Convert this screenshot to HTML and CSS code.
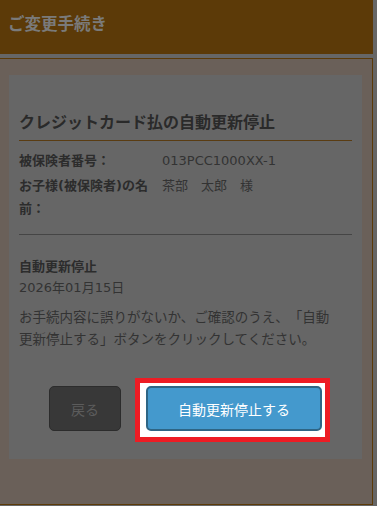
FILE: index.html
```html
<!DOCTYPE html>
<html lang="ja">
<head>
<meta charset="utf-8">
<link rel="stylesheet" href="styles.css">
</head>
<body>
<div class="page">
  <header class="topbar">ご変更手続き</header>
  <div class="strip"></div>
  <main class="main">
    <section class="card">
      <h1 class="title">クレジットカード払の自動更新停止</h1>
      <div class="info">
        <div class="label">被保険者番号：</div>
        <div class="value">013PCC1000XX-1</div>
        <div class="label">お子様(被保険者)の名前：</div>
        <div class="value">茶部　太郎　様</div>
      </div>
      <div class="divider"></div>
      <div class="sub">自動更新停止</div>
      <div class="date">2026年01月15日</div>
      <p class="note">お手続内容に誤りがないか、ご確認のうえ、「自動更新停止する」ボタンをクリックしてください。</p>
      <div class="actions">
        <button class="btn back">戻る</button>
        <div class="highlight">
          <button class="btn primary">自動更新停止する</button>
        </div>
      </div>
    </section>
  </main>
</div>
</body>
</html>
```

FILE: styles.css
```css
html, body {
  margin: 0;
  padding: 0;
}
body {
  background: #666666;
  font-family: "DejaVu Sans", "Noto Sans CJK JP", sans-serif;
  color: #333333;
  text-spacing-trim: space-all;
}
.page {
  width: 373px;
}
.topbar {
  height: 54px;
  background: #5c3a08;
  color: #7a7a7a;
  font-weight: bold;
  font-size: 16.5px;
  line-height: 50px;
  padding-left: 8px;
  box-sizing: border-box;
}
.strip {
  height: 4px;
  background: #666666;
}
.main {
  box-sizing: border-box;
  height: 447px;
  background: #6a6059;
  border-top: 1px solid #5c3a08;
  border-right: 1px solid #5c3a08;
  border-bottom: 1px solid #5c3a08;
  padding: 16px 10px 0 9px;
}
.card {
  background: #666666;
  height: 384px;
  box-sizing: border-box;
  padding: 36px 10px 0 10px;
}
.title {
  margin: 0;
  font-size: 16px;
  line-height: 24px;
  font-weight: bold;
  color: #2a2a2a;
  padding-bottom: 5px;
  border-bottom: 1px solid #5a3c12;
}
.info {
  display: grid;
  grid-template-columns: 136px 1fr;
  column-gap: 7px;
  row-gap: 2px;
  margin-top: 8px;
  font-size: 13px;
  line-height: 23px;
}
.label {
  font-weight: bold;
  color: #2c2c2c;
}
.value {
  color: #333333;
}
.divider {
  margin-top: 14px;
  border-top: 1px solid #454545;
}
.sub {
  margin-top: 21px;
  font-size: 13px;
  line-height: 21px;
  font-weight: bold;
  color: #2c2c2c;
}
.date {
  font-size: 13px;
  line-height: 21px;
  color: #333333;
}
.note {
  margin: 8px 0 0 0;
  padding-right: 10px;
  font-size: 13.5px;
  line-height: 22px;
  color: #333333;
}
.actions {
  display: flex;
  justify-content: center;
  gap: 25px;
  margin-top: 36px;
}
.btn {
  font-family: "Noto Sans CJK JP", sans-serif;
  font-size: 14px;
  height: 45px;
  border-radius: 5px;
  box-sizing: border-box;
  padding: 0;
  cursor: pointer;
}
.back {
  width: 72px;
  background: #383838;
  border: 1px solid #2c2c2c;
  color: #5c5c5c;
}
.highlight {
  position: relative;
}
.highlight::before {
  content: "";
  position: absolute;
  left: -11px;
  top: -8px;
  right: -8px;
  bottom: -11px;
  background: #ffffff;
  border: 5px solid #ed1c24;
}
.primary {
  position: relative;
  width: 176px;
  background: #4499cd;
  border: 2px solid #2e6585;
  color: #ffffff;
}
```
